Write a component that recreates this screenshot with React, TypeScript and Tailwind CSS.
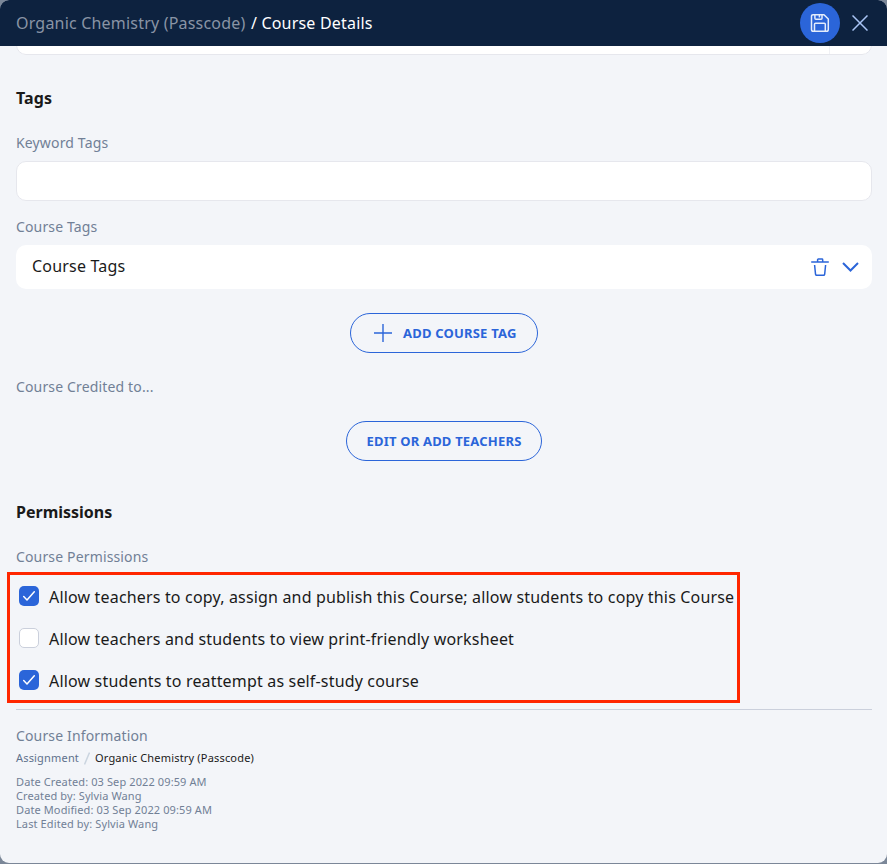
import React from 'react';

function SaveIcon() {
  return (
    <svg width="20" height="20" viewBox="0 0 20 20" fill="none" stroke="#e4ecfb" strokeWidth="1.5" strokeLinejoin="round">
      <path d="M3 1.7H14L18.3 6V16.5A1.8 1.8 0 0 1 16.5 18.3H3.3A1.8 1.8 0 0 1 1.5 16.5V3.2A1.5 1.5 0 0 1 3 1.7Z" />
      <path d="M4.9 1.7V5.2A1 1 0 0 0 5.9 6.2H11A1 1 0 0 0 12 5.2V1.7M9.4 2V4.6M4.5 18.3V11.2A1 1 0 0 1 5.5 10.2H14.3A1 1 0 0 1 15.3 11.2V18.3" />
    </svg>
  );
}

function TrashIcon() {
  return (
    <svg width="18" height="18" viewBox="0 0 18 18" fill="none" stroke="#2b65d9" strokeWidth="1.5">
      <path d="M0.2 4.1H17.8M6.6 4V1.7A0.7 0.7 0 0 1 7.3 1H11A0.7 0.7 0 0 1 11.7 1.7V4M3.6 7L4.5 16A1.2 1.2 0 0 0 5.7 17.2H12.5A1.2 1.2 0 0 0 13.7 16L14.6 7" />
    </svg>
  );
}

function Label({ children }: { children: React.ReactNode }) {
  return <div className="h-5 text-[14px] leading-5 tracking-[0.15px] text-[#718096]">{children}</div>;
}

function Permission({ label, checked }: { label: string; checked: boolean }) {
  return (
    <div className="flex h-[42px] items-start gap-2.5">
      <span
        className={
          checked
            ? 'flex size-5 shrink-0 items-center justify-center rounded-[5px] bg-[#2b65d9]'
            : 'size-5 shrink-0 rounded-[5px] border border-[#cbd0dc] bg-white'
        }
      >
        {checked && (
          <svg width="14" height="12" viewBox="0 0 14 12" fill="none" stroke="white" strokeWidth="1.5" strokeLinecap="round" strokeLinejoin="round">
            <path d="M1.7 6.6L5 10L12.3 1.7" />
          </svg>
        )}
      </span>
      <span className="whitespace-nowrap text-[16px] leading-[22px] tracking-[0.17px] text-[#1a1a1a]">{label}</span>
    </div>
  );
}

export default function App() {
  return (
    <div className="h-[864px] w-[887px] overflow-hidden bg-[#7b8798] font-['Noto_Sans',sans-serif]">
      <div className="flex h-[863px] flex-col overflow-hidden rounded-[9px] bg-[#f3f5f9]">
        <header className="flex h-[46px] shrink-0 items-center bg-[#0d223f] pl-4 pr-[19px]">
          <h1 className="flex-1 whitespace-pre text-[16px] leading-6 tracking-[0.2px] text-white">
            <span className="mr-px text-[#8994a5]">Organic Chemistry (Passcode)</span>
            {' / Course Details'}
          </h1>
          <button className="flex size-10 items-center justify-center rounded-full bg-[#2b65d9]">
            <SaveIcon />
          </button>
          <button className="ml-3">
            <svg width="16" height="16" viewBox="0 0 16 16" stroke="#a9c4f5" strokeWidth="1.5">
              <path d="M0.5 0.5L15.5 15.5M15.5 0.5L0.5 15.5" />
            </svg>
          </button>
        </header>
        <main className="flex flex-col pl-4 pr-[15px]">
          <div className="flex h-[9px] items-end overflow-hidden rounded-b-[10px]">
            <div className="flex h-10 w-full shrink-0 rounded-[10px] border border-[#e6e7ed] bg-white">
              <div className="w-[813px] border-r border-[#f0f1f5]" />
            </div>
          </div>
          <h2 className="mt-[31px] text-[16px] font-bold leading-6 tracking-[0.1px] text-[#1a1a1a]">Tags</h2>
          <div className="mt-[23px]"><Label>Keyword Tags</Label></div>
          <input className="mt-2 h-10 rounded-[10px] border border-[#e6e7ed] bg-white px-4" />
          <div className="mt-4"><Label>Course Tags</Label></div>
          <div className="mt-2 flex h-11 items-center rounded-[10px] bg-white pl-4 pr-[13px]">
            <span className="flex-1 pb-0.5 text-[16px] leading-6 tracking-[0.2px] text-[#1a1a1a]">Course Tags</span>
            <TrashIcon />
            <svg className="ml-[13px]" width="17" height="10" viewBox="0 0 17 10" fill="none" stroke="#2b65d9" strokeWidth="2">
              <path d="M1 1L8.5 8.5L16 1" />
            </svg>
          </div>
          <button className="mt-6 flex h-10 w-[188px] items-center self-center rounded-full border border-[#2b65d9] pl-[23px] text-[13px] font-bold tracking-[0.2px] text-[#2b65d9]">
            <svg className="mr-[11px]" width="18" height="18" viewBox="0 0 18 18" stroke="currentColor" strokeWidth="1.4">
              <path d="M9 0V18M0 9H18" />
            </svg>
            <span className="pt-0.5">ADD COURSE TAG</span>
          </button>
          <div className="mt-6"><Label>Course Credited to...</Label></div>
          <button className="mt-6 h-10 w-[196px] self-center rounded-full border border-[#2b65d9] pt-0.5 text-[13px] font-bold tracking-[0.2px] text-[#2b65d9]">
            EDIT OR ADD TEACHERS
          </button>
          <h2 className="mt-[39px] text-[16px] font-bold leading-6 text-[#1a1a1a]">Permissions</h2>
          <div className="mt-[23px]"><Label>Course Permissions</Label></div>
          <section className="-ml-[9px] mt-[5px] h-[131px] w-[733px] border-[3px] border-[#ff2600] pl-[9px] pt-[11px]">
            <Permission checked label="Allow teachers to copy, assign and publish this Course; allow students to copy this Course" />
            <Permission checked={false} label="Allow teachers and students to view print-friendly worksheet" />
            <Permission checked label="Allow students to reattempt as self-study course" />
          </section>
          <div className="mt-1.5 h-px bg-[#cbd0dc]" />
          <div className="mt-4"><Label>Course Information</Label></div>
          <div className="mt-1 flex h-4 items-center text-[11px] leading-4 tracking-[0.18px]">
            <span className="text-[#5f718c]">Assignment</span>
            <svg className="mx-[5px]" width="6" height="13" viewBox="0 0 6 13" stroke="#cbd5e0" strokeWidth="1.5">
              <path d="M5.5 0.5L0.5 12.5" />
            </svg>
            <span className="text-[#1a1a1a]">Organic Chemistry (Passcode)</span>
          </div>
          <div className="mt-[9px] text-[11px] leading-[14px] tracking-[0.11px] text-[#718096]">
            <p>Date Created: 03 Sep 2022 09:59 AM</p>
            <p>Created by: Sylvia Wang</p>
            <p>Date Modified: 03 Sep 2022 09:59 AM</p>
            <p>Last Edited by: Sylvia Wang</p>
          </div>
        </main>
      </div>
    </div>
  );
}
